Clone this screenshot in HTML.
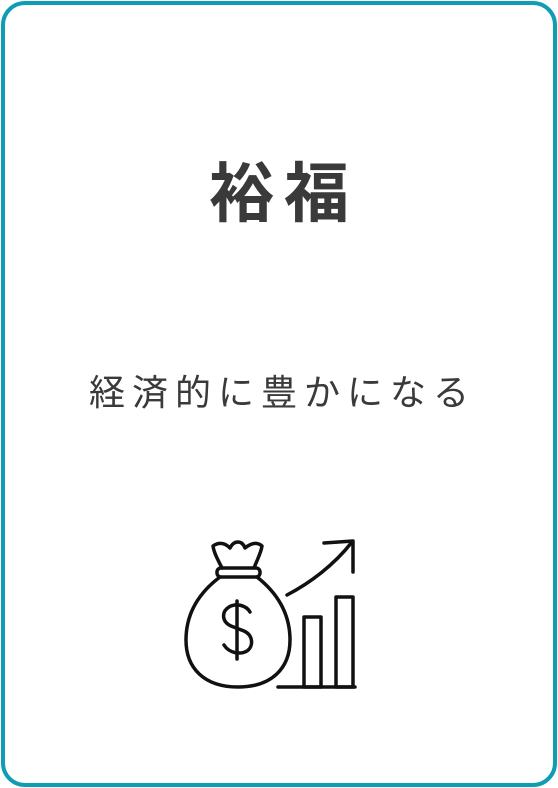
<!DOCTYPE html>
<html><head><meta charset="utf-8"><style>
html,body{margin:0;padding:0;background:#fff;}
body{width:558px;height:788px;position:relative;overflow:hidden;font-family:"Liberation Sans","Noto Sans CJK JP",sans-serif;}
.card{position:absolute;left:1px;top:1px;width:548px;height:778px;border:4px solid #0f9db3;border-radius:24px;}
.t{position:absolute;left:0;width:558px;text-align:center;color:#3a3a3a;white-space:nowrap;}
.t1{top:154px;font-size:65px;font-weight:700;line-height:80px;letter-spacing:10px;text-indent:10px;}
.t2{top:368px;font-size:36px;line-height:50px;letter-spacing:7px;text-indent:7px;}
svg{position:absolute;left:0;top:0;}
</style></head><body>
<div class="card"></div>
<div class="t t1">裕福</div>
<div class="t t2">経済的に豊かになる</div>
<svg width="558" height="788" fill="none" stroke="#111" stroke-width="3.5" stroke-linecap="round" stroke-linejoin="round">
<path d="M222 568 C218 560 214 553 213 546 C220 541 226 544 230 548 C234 540 242 540 245 548 C250 544 256 541 262 546 C261 553 257 560 254 568"/>
<rect x="217" y="568" width="43" height="9" rx="4"/>
<path d="M220 577 C200 592 186 612 186 640 C186 668 204 687 238 687 C272 687 290 668 290 640 C290 612 276 592 257 577"/>
<path d="M250 612 C246 605 236 603 229 607 C221 612 222 622 231 626 L244 631 C253 635 254 646 247 651 C240 655 229 653 224 645"/>
<path d="M237 601 V659"/>
<path d="M287 595 C310 583 334 565 352 542"/>
<path d="M324 543 L353 541 L353 572"/>
<path d="M278 687 H355"/>
<rect x="304" y="617" width="17" height="70"/>
<rect x="336" y="597" width="17" height="90"/>
</svg>
</body></html>
